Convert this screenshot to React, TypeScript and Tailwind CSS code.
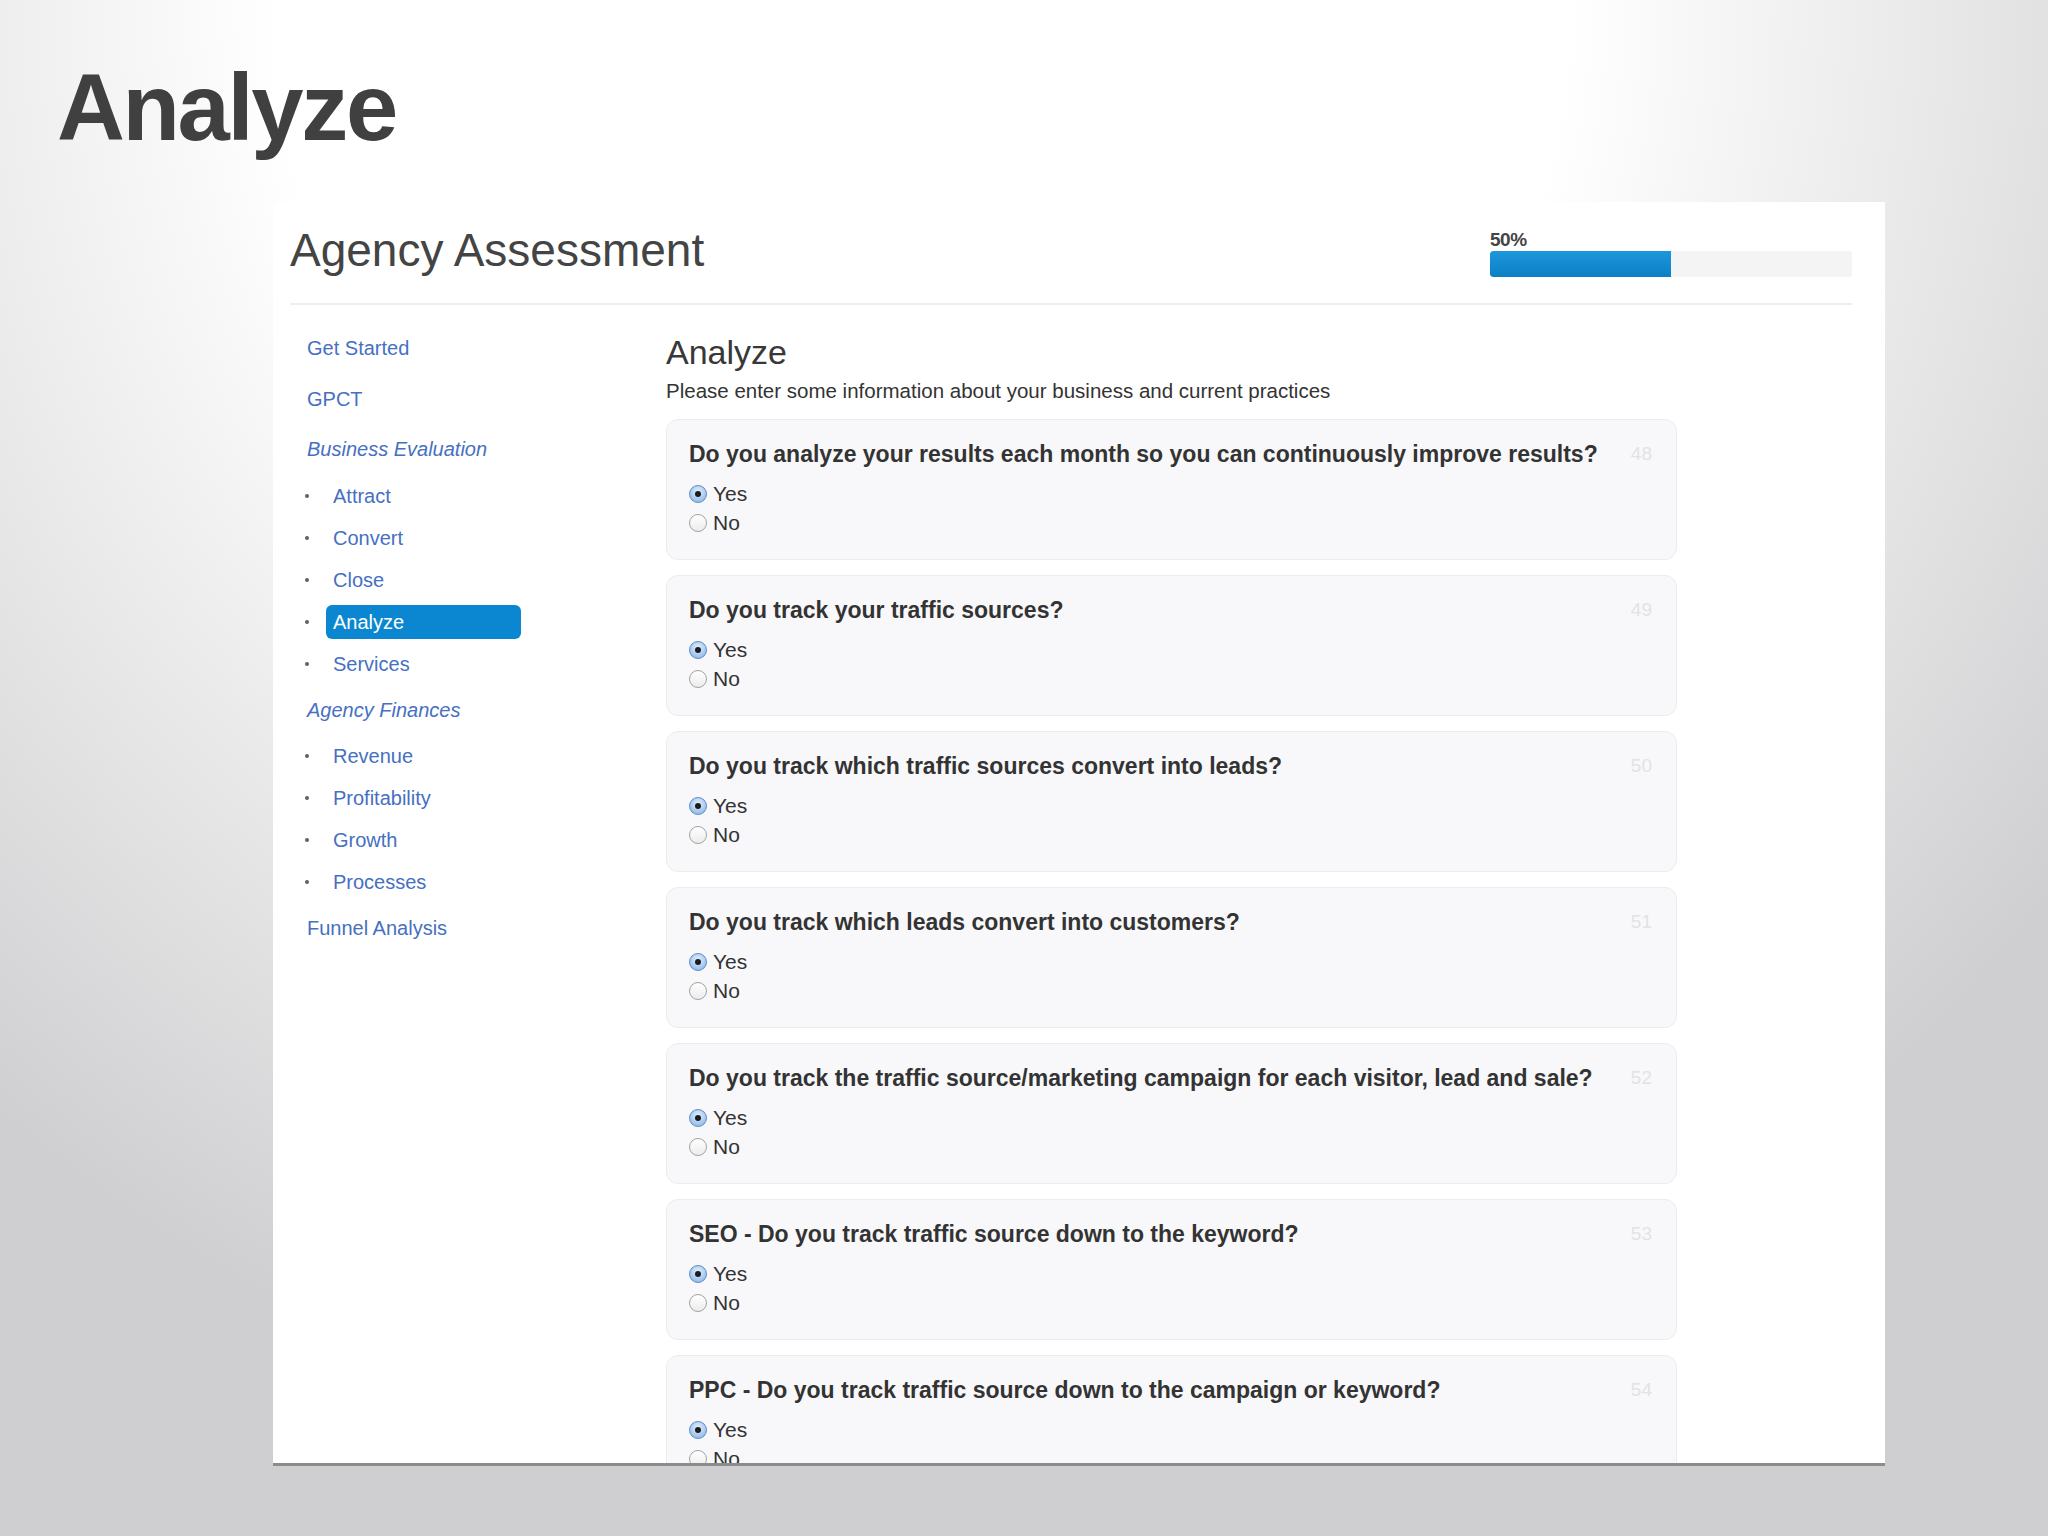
import React from "react";

type Question = { id: number; text: string };

const questions: Question[] = [
  { id: 48, text: "Do you analyze your results each month so you can continuously improve results?" },
  { id: 49, text: "Do you track your traffic sources?" },
  { id: 50, text: "Do you track which traffic sources convert into leads?" },
  { id: 51, text: "Do you track which leads convert into customers?" },
  { id: 52, text: "Do you track the traffic source/marketing campaign for each visitor, lead and sale?" },
  { id: 53, text: "SEO - Do you track traffic source down to the keyword?" },
  { id: 54, text: "PPC - Do you track traffic source down to the campaign or keyword?" },
];

const businessItems = ["Attract", "Convert", "Close", "Analyze", "Services"];
const financeItems = ["Revenue", "Profitability", "Growth", "Processes"];

function Radio({ checked }: { checked: boolean }) {
  return checked ? (
    <span className="w-[18px] h-[18px] rounded-full border border-[#5f8cc4] bg-[radial-gradient(circle_at_50%_35%,#e4f0fc_0%,#9cc3ee_70%,#7aaee6_100%)] flex items-center justify-center shrink-0">
      <span className="w-[6px] h-[6px] rounded-full bg-[#1c1c1c]" />
    </span>
  ) : (
    <span className="w-[18px] h-[18px] rounded-full border border-[#a2a2a2] bg-[linear-gradient(#ffffff,#ececec)] shrink-0" />
  );
}

function NavLink({ label, active }: { label: string; active?: boolean }) {
  return (
    <li className="flex items-center h-[42px]">
      <span className="w-[4px] h-[4px] rounded-full bg-[#606060] ml-[1px] mr-[17px]" />
      <span
        className={`h-[34px] w-[195px] px-[7px] flex items-center rounded-[6px] ${
          active ? "bg-[#0b87d1] text-white" : "text-[#4670c2]"
        }`}
      >
        {label}
      </span>
    </li>
  );
}

function QuestionCard({ q }: { q: Question }) {
  return (
    <div className="h-[141px] shrink-0 rounded-[12px] border border-[#ececef] bg-[#f8f8fa] pl-[22px] pr-[24px] pt-[20px]">
      <div className="flex justify-between items-center leading-[28px]">
        <span className="text-[23px] font-bold text-[#333333]">{q.text}</span>
        <span className="text-[19px] text-[#e2e2e6]">{q.id}</span>
      </div>
      <div className="mt-[11px] text-[21px] text-[#333333] leading-[29px]">
        <label className="flex items-center gap-[6px]">
          <Radio checked />
          Yes
        </label>
        <label className="flex items-center gap-[6px]">
          <Radio checked={false} />
          No
        </label>
      </div>
    </div>
  );
}

export default function App() {
  return (
    <div className="w-[2048px] h-[1536px] overflow-hidden bg-[radial-gradient(ellipse_70%_95%_at_45%_0%,#ffffff_45%,#cfcfd1_100%)] font-['Liberation_Sans',Arial,sans-serif]">
      <h1 className="pl-[57px] pt-[61px] text-[94px] leading-none font-bold text-[#404040] tracking-[-0.025em]">
        Analyze
      </h1>

      <div className="ml-[273px] mt-[47px] w-[1612px] h-[1264px] bg-white border-b-[3px] border-[#8c8c8c] overflow-hidden">
        <div className="ml-[17px] mr-[33px] pt-[25px] pb-[26px] flex justify-between items-start border-b-2 border-[#eeeeee]">
          <div className="text-[46px] leading-none text-[#444444]">Agency Assessment</div>
          <div className="w-[362px]">
            <div className="mt-[3px] text-[19px] leading-none font-bold text-[#444444] tracking-[-0.5px]">50%</div>
            <div className="mt-[2px] h-[26px] bg-[#f4f4f4] rounded-[3px] overflow-hidden">
              <div className="h-full w-1/2 bg-[linear-gradient(#1d97dc,#0b7fc4)] rounded-l-[3px]" />
            </div>
          </div>
        </div>

        <div className="ml-[17px] flex">
          <nav className="w-[376px] shrink-0 pl-[17px] pt-[22px] text-[20px] text-[#4670c2]">
            <div className="leading-[42px]">Get Started</div>
            <div className="leading-[42px] mt-[9px]">GPCT</div>
            <div className="leading-[42px] mt-[8px] italic">Business Evaluation</div>
            <ul className="mt-[5px] -ml-[3px]">
              {businessItems.map((item) => (
                <NavLink key={item} label={item} active={item === "Analyze"} />
              ))}
            </ul>
            <div className="leading-[42px] mt-[4px] italic">Agency Finances</div>
            <ul className="mt-[4px] -ml-[3px]">
              {financeItems.map((item) => (
                <NavLink key={item} label={item} />
              ))}
            </ul>
            <div className="leading-[42px] mt-[4px]">Funnel Analysis</div>
          </nav>

          <main className="w-[1011px] pt-[27px]">
            <h2 className="text-[34px] leading-[40px] text-[#383838]">Analyze</h2>
            <p className="mt-[7px] text-[20.5px] leading-[24px] text-[#333333]">
              Please enter some information about your business and current practices
            </p>
            <div className="mt-[16px] flex flex-col gap-[15px]">
              {questions.map((q) => (
                <QuestionCard key={q.id} q={q} />
              ))}
            </div>
          </main>
        </div>
      </div>
    </div>
  );
}
